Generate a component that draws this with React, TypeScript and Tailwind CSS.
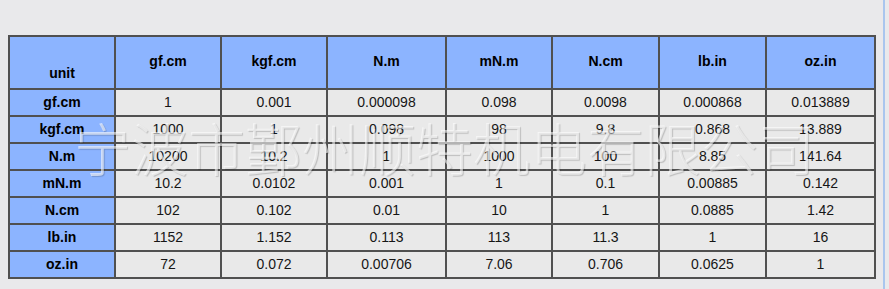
const units = ['gf.cm', 'kgf.cm', 'N.m', 'mN.m', 'N.cm', 'lb.in', 'oz.in']

const rows: string[][] = [
  ['1', '0.001', '0.000098', '0.098', '0.0098', '0.000868', '0.013889'],
  ['1000', '1', '0.098', '98', '9.8', '0.868', '13.889'],
  ['10200', '10.2', '1', '1000', '100', '8.85', '141.64'],
  ['10.2', '0.0102', '0.001', '1', '0.1', '0.00885', '0.142'],
  ['102', '0.102', '0.01', '10', '1', '0.0885', '1.42'],
  ['1152', '1.152', '0.113', '113', '11.3', '1', '16'],
  ['72', '0.072', '0.00706', '7.06', '0.706', '0.0625', '1'],
]

export default function App() {
  return (
    <div className="h-[289px] w-[889px] bg-[#e9e9eb]">
      <div className="relative h-full w-[885px] overflow-hidden border-r-2 border-[#a9c6ee] pl-2 pt-[35px] font-['Liberation_Sans',Arial,sans-serif] text-[14px]">
        <table className="w-[866px] table-fixed border-collapse border-2 border-[#505050]">
          <colgroup>
            <col className="w-[106px]" />
            <col className="w-[106px]" />
            <col className="w-[106px]" />
            <col className="w-[119px]" />
            <col className="w-[106px]" />
            <col className="w-[107px]" />
            <col className="w-[107px]" />
            <col className="w-[109px]" />
          </colgroup>
          <thead>
            <tr className="h-[53px] bg-[#8cb4ff]">
              <th className="border-2 border-[#505050] pb-[4px] pt-[16px] align-bottom font-bold text-black">unit</th>
              {units.map((u) => (
                <th key={u} className="border-2 border-[#505050] pb-[3px] font-bold text-black">
                  {u}
                </th>
              ))}
            </tr>
          </thead>
          <tbody>
            {rows.map((r, i) => (
              <tr key={units[i]} className="h-[27px]">
                <th className="border-2 border-[#505050] bg-[#8cb4ff] font-bold text-black">{units[i]}</th>
                {r.map((v, j) => (
                  <td key={j} className="border-2 border-[#505050] bg-[#e9e9e9] text-center text-[#161616]">
                    {v}
                  </td>
                ))}
              </tr>
            ))}
          </tbody>
        </table>
        {/* watermark */}
        <div className="pointer-events-none absolute left-[74px] top-[117px] whitespace-nowrap font-['Noto_Sans_CJK_SC',sans-serif] text-[57px] font-light leading-[58px] text-white/60 [text-shadow:1px_1px_1px_rgba(0,0,0,0.18)]">
          宁波市鄞州顺特机电有限公司
        </div>
      </div>
    </div>
  )
}
